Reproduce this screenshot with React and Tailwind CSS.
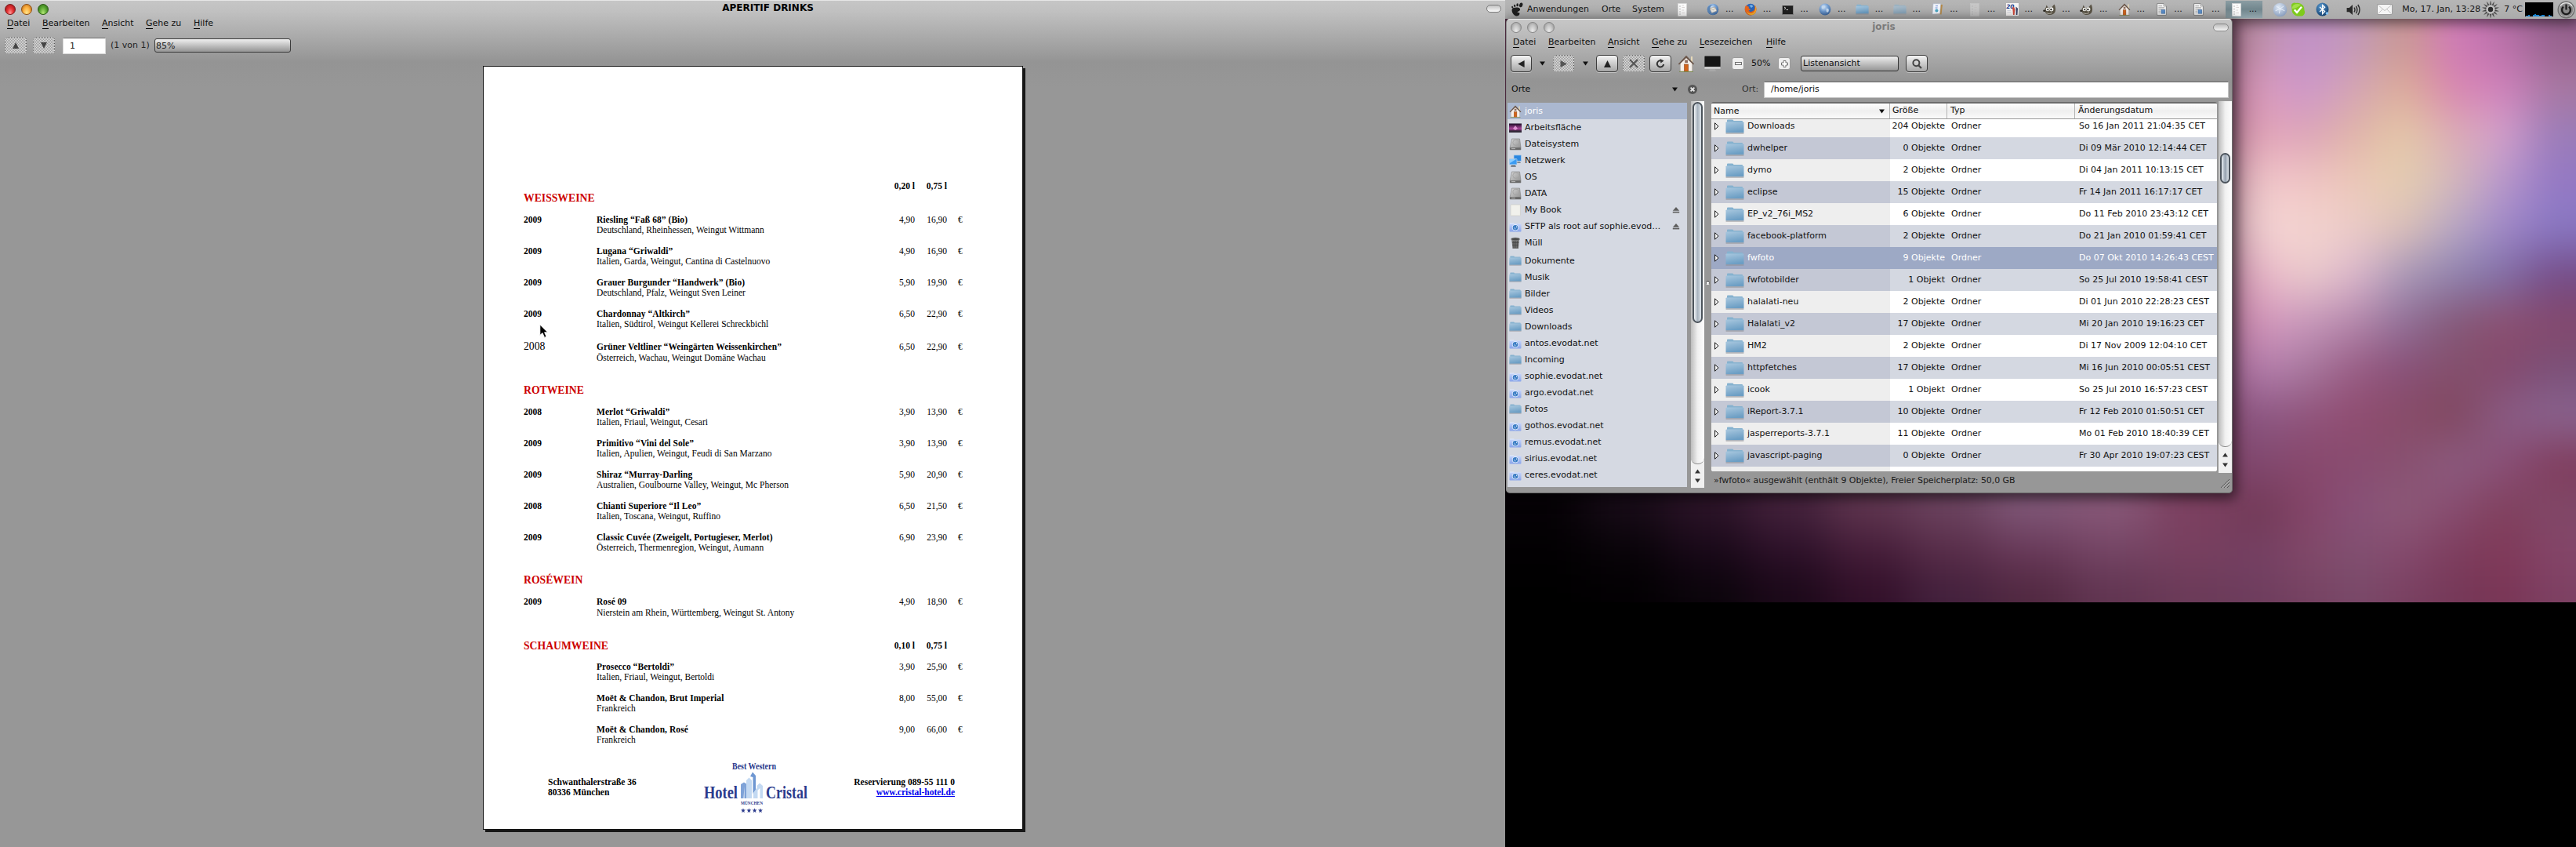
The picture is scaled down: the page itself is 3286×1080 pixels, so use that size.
import React from "react";

/* ---------- wallpaper ---------- */

const MESH = [
  ["#c094a8", "#c090c8", "#c098b8", "#c89890", "#d07ab8", "#b870a8", "#94608c"],
  ["#dc9cbc", "#cc96cc", "#d4a4b4", "#dcac98", "#d884b0", "#d080bc", "#a878a0"],
  ["#e4a4b8", "#dca4b8", "#e0b4a8", "#e4c8a8", "#dcacb4", "#d4a0cc", "#9a7cb8"],
  ["#f2c8cc", "#efc4c4", "#ecc8b8", "#e4ceb0", "#d4b8bc", "#b898cc", "#9478c4"],
  ["#f4d4d4", "#f4d4d0", "#ecccc8", "#dcc0b8", "#b8a8c4", "#a088c8", "#8878c4"],
  ["#e8b4c8", "#eccccc", "#dcb8cc", "#a898b8", "#9084b0", "#8070a8", "#744c88"],
  ["#d898bc", "#c898bc", "#b488ac", "#907098", "#845878", "#8c5070", "#84486c"],
  ["#b880b0", "#a87aa0", "#985c84", "#885078", "#84506c", "#84486c", "#7a5078"],
  ["#8c5884", "#90547c", "#904c70", "#884c68", "#80465e", "#8a5c84", "#8a6490"],
  ["#804870", "#88486c", "#884c70", "#885070", "#8c5c80", "#8a5078", "#803c5c"],
  ["#703854", "#844468", "#885078", "#8c5a78", "#884c70", "#80405c", "#804868"],
  ["#744064", "#804868", "#805070", "#84486c", "#7c3c5c", "#803858", "#844468"],
  ["#6c3c5c", "#744060", "#784868", "#784060", "#743858", "#783454", "#7c4062"],
];
const STRIP = [
  ["#060206", "#180c18", "#2c1428", "#44223c", "#603650", "#6c4460", "#805878", "#885878", "#7c4060"],
  ["#020002", "#080308", "#180818", "#2c1028", "#441c38", "#582c48", "#683858", "#744464", "#784060"],
  ["#000000", "#020002", "#0a040a", "#1a0818", "#300f28", "#42203c", "#502840", "#603450", "#6a3a58"],
];

function Wallpaper() {
  return (
    <svg className="absolute left-0 top-0" width="1366" height="768" viewBox="0 0 1366 768">
      <defs>
        <filter id="soft" x="-10%" y="-10%" width="120%" height="120%" colorInterpolationFilters="sRGB">
          <feGaussianBlur stdDeviation="28" />
        </filter>
      </defs>
      <rect width="1366" height="768" fill="#6a3a58" />
      <g filter="url(#soft)">
        {STRIP.map((row, r) =>
          row.map((c, i) => (
            <rect key={r + "-" + i} x={i === 0 ? -100 : i * 103} y={r === 0 ? 500 : 620 + r * 55} width={i === 0 ? 204 : 104} height={r === 0 ? 176 : r === 2 ? 160 : 56} fill={c} />
          ))
        )}
        {MESH.map((row, r) =>
          row.map((c, i) => (
            <rect key={r + "-" + i} x={927 + i * 63} y={r === 0 ? -60 : 20 + r * 60} width={i === 6 ? 160 : 64} height={r === 0 ? 141 : r === 12 ? 140 : 61} fill={c} />
          ))
        )}
      </g>
    </svg>
  );
}

/* ---------- icons ---------- */

const Svg = ({ w = 16, h = 16, vb, children }) => (
  <svg className="block shrink-0" width={w} height={h} viewBox={vb || "0 0 16 16"}>{children}</svg>
);

function Defs() {
  return (
    <svg width="0" height="0" className="absolute">
      <defs>
        <linearGradient id="fold" x1="0" y1="0" x2="0.3" y2="1">
          <stop offset="0" stopColor="#a9c8df" />
          <stop offset="1" stopColor="#6c9ec4" />
        </linearGradient>
        <linearGradient id="net" x1="0" y1="0" x2="0" y2="1">
          <stop offset="0" stopColor="#c5d4fa" />
          <stop offset="1" stopColor="#88a4ea" />
        </linearGradient>
        <linearGradient id="disk" x1="0" y1="0" x2="1" y2="1">
          <stop offset="0" stopColor="#d6d6d6" />
          <stop offset="1" stopColor="#8c8c8c" />
        </linearGradient>
        <radialGradient id="orb" cx="0.4" cy="0.3" r="0.75">
          <stop offset="0" stopColor="#cfe2f7" />
          <stop offset="0.5" stopColor="#6f9bd0" />
          <stop offset="1" stopColor="#3a649c" />
        </radialGradient>
        <radialGradient id="paleorb" cx="0.4" cy="0.3" r="0.75">
          <stop offset="0" stopColor="#dfe9f5" />
          <stop offset="1" stopColor="#8499ba" />
        </radialGradient>
        <radialGradient id="bt" cx="0.4" cy="0.3" r="0.75">
          <stop offset="0" stopColor="#5a9ad0" />
          <stop offset="1" stopColor="#0e3c6c" />
        </radialGradient>
        <linearGradient id="wall" x1="0" y1="0" x2="0" y2="1">
          <stop offset="0" stopColor="#1a0c24" />
          <stop offset="0.55" stopColor="#a8459a" />
          <stop offset="1" stopColor="#1c0e20" />
        </linearGradient>
        <pattern id="dither" width="2" height="2" patternUnits="userSpaceOnUse">
          <rect width="1" height="1" fill="#989898" />
          <rect x="1" y="1" width="1" height="1" fill="#989898" />
        </pattern>
      </defs>
    </svg>
  );
}

const Folder = ({ w = 16, h = 13, faded }) => (
  <Svg w={w} h={h} vb="0 0 24 19">
    <g opacity={faded ? 0.55 : 1}>
      <path d="M2 1.5Q2 .5 3 .5H9Q10 .5 10.5 2H21Q22 2 22 3V6H2Z" fill="#86b2cf" />
      <path d="M.5 4.2Q.5 3.4 1.5 3.4H22.5Q23.5 3.4 23.5 4.2V17.3H.5Z" fill="url(#fold)" />
      <path d="M.6 18H23.4" stroke="#8f8f94" strokeWidth="1" />
    </g>
  </Svg>
);
const NetFolder = () => (
  <Svg>
    <path d="M1 3.5H6L7 4.5H15V6H1Z" fill="#e4ecfb" />
    <rect x=".5" y="4.5" width="15" height="10" rx=".8" fill="url(#net)" />
    <circle cx="8" cy="9.2" r="4" fill="#eef5ff" />
    <circle cx="8" cy="9.2" r="3.3" fill="#3a7cc4" />
    <path d="M6 8L8.3 10.6L8 12Z M9 7L10.4 8.5L9 9Z" fill="#eef6ff" />
  </Svg>
);
const Home = ({ s = 16 }) => (
  <Svg w={s} h={s} vb="0 0 22 22">
    <path d="M17 2H19V9H17Z" fill="#e8d9b8" />
    <path d="M3.5 10L11 2.5L18.5 10V21H3.5Z" fill="#f6f1ec" stroke="#b9aca0" strokeWidth=".6" />
    <path d="M11 .8L.8 11.6L2 12.6L11 4L20 12.6L21.2 11.6Z" fill="#6b564a" />
    <rect x="8.6" y="12" width="5" height="9" fill="#d4651a" stroke="#87401a" strokeWidth=".6" />
    <rect x="9.2" y="6.5" width="3.8" height="3.6" fill="#8f6f60" />
    <path d="M2 21.4H20" stroke="#7c8b4f" strokeWidth="1" />
  </Svg>
);
const Disk = () => (
  <Svg>
    <path d="M3.5 1H13.5L15 12V15H1.2V12Z" fill="url(#disk)" stroke="#7e7e7e" strokeWidth=".6" />
    <ellipse cx="8.8" cy="5.8" rx="4" ry="3.6" fill="none" stroke="#a3a3a3" strokeWidth=".9" />
    <rect x="1.2" y="12.2" width="13.6" height="2.8" fill="#686868" />
    <path d="M3 13.6H8" stroke="#ccc" strokeWidth=".8" />
  </Svg>
);
const Desktop = () => (
  <Svg>
    <rect x="0" y="2.5" width="16" height="11.5" fill="url(#wall)" />
    <path d="M5 9L8 5L11 9L8 11Z" fill="#f0a8e4" opacity=".8" />
    <rect x="0" y="11.5" width="16" height="2.5" fill="#332a3a" />
  </Svg>
);
const Network = () => (
  <Svg>
    <rect x="6" y=".8" width="9.6" height="7.6" rx=".6" fill="#2a86e0" stroke="#c3d4e6" strokeWidth=".7" />
    <path d="M8.5 9.5H14L15 10.8H8Z" fill="#5a6672" />
    <rect x=".4" y="5.5" width="9.6" height="7.4" rx=".6" fill="#3b9bf2" stroke="#c3d4e6" strokeWidth=".7" />
    <path d="M1 6L9 6L1 11Z" fill="#8accff" />
    <path d="M3 14H8L9 15.5H2Z" fill="#3c4650" />
  </Svg>
);
const PlainDoc = () => (
  <Svg>
    <rect x="2" y="1" width="12.4" height="14" rx=".6" fill="#f1f1ec" stroke="#cfcfc8" strokeWidth=".7" />
  </Svg>
);
const Trash = () => (
  <Svg>
    <path d="M3.2 3H13L12 15H4.5Z" fill="#6f6f6f" />
    <ellipse cx="8.1" cy="2.9" rx="5.6" ry="1.9" fill="#4a4a4a" stroke="#9a9a9a" strokeWidth=".6" />
    <path d="M6 5V14M8.2 5V14M10.4 5V14M4 7.5H12.4M4.2 10.5H12" stroke="#3b3b3b" strokeWidth=".6" />
  </Svg>
);
const Eject = () => (
  <Svg w={10} h={8} vb="0 0 10 8">
    <path d="M5 0L9.2 4.8H.8Z" fill="#5d5d5d" />
    <rect x=".8" y="5.8" width="8.4" height="1.6" fill="#5d5d5d" />
  </Svg>
);
const ListDoc = ({ faded }) => (
  <Svg w={12} h={17} vb="0 0 12 17">
    <g opacity={faded ? 0.5 : 1}>
      <rect x=".5" y=".5" width="11" height="16" fill={faded ? "#dcdcdc" : "#fbfbfb"} stroke="#d8d8d8" strokeWidth=".6" />
      <path d="M2 4H4M2 7.5H4M2 11H4M2 14H4" stroke="#b8b8b8" strokeWidth="1" />
      <path d="M5.5 3H8M5.5 5.5H9M5.5 9H8M5.5 12.5H9" stroke="#d0c8c8" strokeWidth=".7" />
    </g>
  </Svg>
);
const Foot = () => (
  <Svg w={16} h={18} vb="0 0 16 18">
    <g fill="#1e1e1e">
      <path d="M1.6 9.2C2 6.8 6.5 6.2 9.8 6.8C12.8 7.4 12.6 10.5 10.5 11.2C8.8 11.8 8.4 12.6 9 13.4C10 12.6 11.6 13 11.4 14.8C11.2 17 7.5 18.4 5 16.6C3 15 1.2 12 1.6 9.2Z" />
      <ellipse cx="13.2" cy="3.4" rx="2.1" ry="3" transform="rotate(18 13.2 3.4)" />
      <ellipse cx="8.7" cy="3.2" rx="1.3" ry="2" />
      <ellipse cx="5.2" cy="4.4" rx="1.1" ry="1.7" transform="rotate(-15 5.2 4.4)" />
      <ellipse cx="2.2" cy="6.2" rx="1" ry="1.4" transform="rotate(-25 2.2 6.2)" />
    </g>
  </Svg>
);
const Thunderbird = () => (
  <Svg>
    <circle cx="8" cy="8" r="7.3" fill="url(#orb)" />
    <path d="M4 6.5L10.5 5L13 10L6.5 12.5Z" fill="#eceae4" stroke="#9a8f80" strokeWidth=".5" />
    <path d="M4 6.5L9 9L10.5 5" fill="none" stroke="#a89880" strokeWidth=".6" />
    <path d="M1 9C2 14 7 16 11 14.2C7 14 4.5 12 4 7.5C4 5 5.5 3.2 8 2.2C4 1.6 0 5 1 9Z" fill="#5b86b8" />
  </Svg>
);
const Firefox = () => (
  <Svg>
    <circle cx="8" cy="8" r="7.2" fill="#2c66b8" />
    <path d="M1 5C-.6 11 3.6 15.8 8.4 15.6C13.4 15.4 16.6 10.6 15.2 5.4C14.8 4 14.2 3 13.2 2.2C14 5 13.6 8 11.6 9.8C9.6 11.6 6.4 11 5.4 9.4L8 8.8L7.2 7.4L5.6 6.4L6 4.6C4.6 4.6 3.6 4 3 2.6C2 3 1.4 4 1 5Z" fill="#e9661c" />
    <path d="M13.2 2.2C15 6 14.4 10 11.6 12C8.5 14 4.5 13 2.6 10C3.8 14.2 8 16 11.6 14.4C15.6 12.4 16.6 6 13.2 2.2Z" fill="#f7b22c" />
    <path d="M6.5 3L9.5 2.2L11.4 4L9 6Z" fill="#77b4ea" />
  </Svg>
);
const Terminal = () => (
  <Svg w={15} h={14} vb="0 0 15 14">
    <rect x=".5" y="1.5" width="14" height="12" rx=".6" fill="#202020" stroke="#8a8a8a" strokeWidth="1" />
    <path d="M.5 1.5H14.5" stroke="#c4c4c4" strokeWidth="1.2" />
    <path d="M3 4L5 5.4L3 6.8M5.6 7.5H8" stroke="#e8e8e8" strokeWidth=".9" fill="none" />
  </Svg>
);
const Globe = ({ pale, s = 16 }) => (
  <Svg w={s} h={s}>
    <circle cx="8" cy="8" r="7.4" fill={pale ? "url(#paleorb)" : "url(#orb)"} />
    {pale ? (
      <path d="M4 4L8 7L12 4M8 7L7 12M8 7L13 9M3 9L8 7" stroke="#eef4fb" strokeWidth=".7" fill="none" />
    ) : (
      <path d="M4 3.6C6 2.4 8 3 8.4 4.4C8 6 6 6 5.6 7.6C4.4 7.4 3 6 4 3.6ZM9.5 7C12 6 13.6 8 12.6 10.4C11.4 12.4 10 12 9.6 10Z" fill="#c4d9ef" />
    )}
  </Svg>
);
const Writer = () => (
  <Svg w={15} h={16} vb="0 0 15 16">
    <path d="M4 1L14 2L12.5 14.6L2 13Z" fill="#b48a4a" />
    <path d="M2 .8L11.6 .8L10.6 13.6L1 14Z" fill="#f2f5fb" stroke="#a8b4cc" strokeWidth=".5" />
    <path d="M5 3.6H8M4.6 6H7.6" stroke="#6f8fd8" strokeWidth="1" />
    <circle cx="6.4" cy="9.6" r="2" fill="#4aa6c4" />
  </Svg>
);
const Calendar = () => (
  <Svg w={16} h={16}>
    <rect width="16" height="16" fill="#f6f4f4" />
    <text x="0.2" y="6.6" fontSize="7.4" fontWeight="bold" fontStyle="italic" fontFamily="DejaVu Sans" fill="#1e3d8c">20</text>
    <path d="M8 6L10 4.4L11.4 8L10.6 15H9L8.6 10Z" fill="#cf4a3c" />
    <path d="M12.4 4.6L15 6.8L14.4 15H12.8Z" fill="#3a4468" />
    <path d="M1.4 9.5H6M1.4 11.5H6" stroke="#c8ccd8" strokeWidth=".7" />
  </Svg>
);
const Gimp = () => (
  <Svg w={17} h={15} vb="0 0 17 15">
    <path d="M3 5C5 6 8 5 11 4.6L14.4 .6C16 3 16.6 7 15.6 10C14 14 7 15.6 4 12C2.8 10.6 2 7.4 3 5Z" fill="#5c5648" />
    <path d="M3.4 5.4L4.6 1.4L6.8 5Z" fill="#5c5648" />
    <circle cx="6" cy="7" r="2.3" fill="#f6f6f2" />
    <circle cx="10.8" cy="6.8" r="2.6" fill="#f6f6f2" />
    <circle cx="6.3" cy="7.2" r="1" fill="#111" />
    <circle cx="10.4" cy="7.2" r="1.1" fill="#111" />
    <ellipse cx="1.8" cy="8.8" rx="1.6" ry="1.3" fill="#2a2620" />
    <path d="M4.6 11.6C7 13 10 12.6 12 11" stroke="#d8d4c8" strokeWidth=".9" fill="none" />
  </Svg>
);
const Odt = () => (
  <Svg w={13} h={16} vb="0 0 13 16">
    <path d="M.6 .6H9L12.4 4V15.4H.6Z" fill="#f4f4f4" stroke="#7d7d7d" strokeWidth=".9" />
    <path d="M9 .6V4H12.4" fill="#d6d6d6" stroke="#8a8a8a" strokeWidth=".6" />
    <path d="M2.4 3.6H7M2.4 5.8H10M2.4 8H10M2.4 10.2H5M2.4 12.4H5" stroke="#9c9c9c" strokeWidth=".9" />
    <rect x="6" y="8.6" width="4.8" height="4.6" fill="#5b8fcb" stroke="#3b6498" strokeWidth=".5" />
  </Svg>
);
const SkypeOk = () => (
  <Svg w={19} h={19} vb="0 0 19 19">
    <path d="M1 5C0 1 5 -.4 7 1C13 0 18 4.4 17.4 10C19.6 14 16 18.6 12 17.4C6 18.6 1 14 1.6 8.6Z" fill="#7ecb1c" />
    <path d="M2 6C3 1.6 9 1 13 3C10 6 5 8 2 8Z" fill="#b4e860" opacity=".7" />
    <path d="M4.8 9.4L8 13L14 5.8" stroke="#fff" strokeWidth="2.4" fill="none" />
  </Svg>
);
const Bluetooth = () => (
  <Svg w={17} h={18} vb="0 0 17 18">
    <ellipse cx="8.5" cy="9" rx="8" ry="8.6" fill="url(#bt)" />
    <path d="M5 6L11.6 11.6L8.6 14.6V3.4L11.6 6.2L5 12" stroke="#fff" strokeWidth="1.3" fill="none" />
    <circle cx="14.4" cy="14" r="1.8" fill="#7fc2f4" />
  </Svg>
);
const Speaker = () => (
  <Svg w={19} h={15} vb="0 0 19 15">
    <path d="M.6 5H3.8L8 1V14L3.8 10.2H.6Z" fill="#2a2a2a" />
    <path d="M10 4.6Q12 7.5 10 10.4M12.4 2.8Q15.4 7.5 12.4 12.2M14.8 1Q19.2 7.5 14.8 14" stroke="#2a2a2a" strokeWidth="1.4" fill="none" />
  </Svg>
);
const Mail = () => (
  <Svg w={20} h={14} vb="0 0 20 14">
    <rect x=".5" y=".5" width="19" height="13" rx=".6" fill="#f5f5f5" stroke="#8f8f8f" strokeWidth=".8" />
    <path d="M1.5 1.5L10 8.6L18.5 1.5M1.5 12.6L7.4 6.6M18.5 12.6L12.6 6.6" stroke="#b3b3b3" strokeWidth=".8" fill="none" />
  </Svg>
);
const Sun = () => (
  <Svg w={22} h={22} vb="-11 -11 22 22">
    {Array.from({ length: 14 }, (_, i) => (
      <path key={i} d="M-.9 -6L0 -10.6L.9 -6Z" transform={`rotate(${(i * 360) / 14})`} fill="#333" stroke="#555" strokeWidth=".4" />
    ))}
    <circle r="4.6" fill="#c8c8c8" />
    <circle r="3.2" fill="#2b2b2b" />
  </Svg>
);
const SysMon = () => (
  <Svg w={36} h={18} vb="0 0 36 18">
    <rect width="36" height="18" fill="#000" />
    <path d="M1 18V17H4V16H6V18ZM10 18V16H12V15H14V16H18V17H21V16H25V18ZM30 18V16H32V17H34V18Z" fill="#1683cf" />
  </Svg>
);
const Power = () => (
  <Svg w={23} h={23} vb="-11.5 -11.5 23 23">
    <circle r="11" fill="#6d6d6d" />
    <circle r="9.6" fill="#c9c9c9" />
    <circle r="8.8" fill="#8a8a8a" />
    <path d="M-3.6 -3.8A5.4 5.4 0 1 0 3.6 -3.8" stroke="#1c1c1c" strokeWidth="2.4" fill="none" />
    <path d="M0 -7V0" stroke="#1c1c1c" strokeWidth="2.2" />
    <path d="M-7.4 -5A9 9 0 0 1 7.4 -5" stroke="#e6e6e6" strokeWidth="1.4" fill="none" />
  </Svg>
);

/* ---------- shared widgets ---------- */

function Menu({ items }) {
  return (
    <div className="flex h-[16px] items-center leading-[16px]">
      {items.map(([t, w]) => (
        <span key={t} className="shrink-0 whitespace-nowrap" style={{ width: w }}>
          <span className="border-b border-black">{t[0]}</span>
          {t.slice(1)}
        </span>
      ))}
    </div>
  );
}

const btn = "flex h-[22px] shrink-0 items-center justify-center rounded-[4px] border border-[#3c3c3c] bg-gradient-to-b from-[#f4f4f4] to-[#a6a6a6] shadow-[0_1px_0_#c4c4c4]";
const btnOff = "flex h-[22px] shrink-0 items-center justify-center overflow-hidden rounded-[4px] border border-dotted border-[#5a5a5a] bg-[#e0e0e0]";

function OffButton({ w, children }) {
  return (
    <div className={btnOff} style={{ width: w }}>
      <svg className="block" width={w - 2} height="20">
        <rect width={w - 2} height="20" fill="url(#dither)" />
        <g transform={`translate(${(w - 2) / 2 - 4} 6)`}>{children}</g>
      </svg>
    </div>
  );
}
const Drop = () => (
  <Svg w={7} h={6} vb="0 0 7 6"><path d="M0 .5H7L3.5 5.5Z" fill="#111" /></Svg>
);

function Scrollbar({ top, thumb, track, tint }) {
  return (
    <div className="flex w-[17px] shrink-0 flex-col bg-gradient-to-b from-[#f5f5f5] to-[#f0f0f0]">
      <div className="flex w-full flex-col rounded-b-[8px] border-b border-[#8a8a8a] bg-gradient-to-r from-[#bdbdbd] via-[#f0f0f0] to-[#fdfdfd] px-[2px]" style={{ height: track, paddingTop: top }}>
        <div
          className={
            tint
              ? "w-full rounded-full border-2 border-[#4c545c] bg-gradient-to-r from-[#f2f5f8] via-[#a9b4bf] to-[#dde4ea]"
              : "w-full rounded-full border-2 border-[#4c545c] bg-gradient-to-r from-[#e8edf2] via-[#97a3b0] to-[#dde4ea]"
          }
          style={{ height: thumb }}
        />
      </div>
      <div className="flex flex-1 flex-col items-center justify-evenly">
        <Svg w={7} h={6} vb="0 0 7 6"><path d="M0 5.5H7L3.5 .5Z" fill="#333" /></Svg>
        <Svg w={7} h={6} vb="0 0 7 6"><path d="M0 .5H7L3.5 5.5Z" fill="#333" /></Svg>
      </div>
    </div>
  );
}

/* ---------- document viewer ---------- */

function Entry({ y, n, s, a, b, tall, big }) {
  return (
    <div className={tall ? "grid h-[28px] grid-cols-[93px_346px_60px_41px_40px] leading-[14px]" : "grid h-[40px] grid-cols-[93px_346px_60px_41px_40px] content-start leading-[13px]"}>
      <span className={big ? "text-[13.7px]" : "font-bold"}>{y}</span>
      <div>
        <div className="font-bold tracking-[0.06px]">{n}</div>
        <div>{s}</div>
      </div>
      <span className="text-right">{a}</span>
      <span className="text-right">{b}</span>
      <span className="pl-[14px]">€</span>
    </div>
  );
}
const Head = ({ children }) => (
  <div className="h-[18px] w-[439px] text-[13.7px] font-bold leading-[20px] text-[#cc0000]">{children}</div>
);

const WHITE = [
  ["2009", "Riesling “Faß 68” (Bio)", "Deutschland, Rheinhessen, Weingut Wittmann", "4,90", "16,90"],
  ["2009", "Lugana “Griwaldi”", "Italien, Garda, Weingut, Cantina di Castelnuovo", "4,90", "16,90"],
  ["2009", "Grauer Burgunder “Handwerk” (Bio)", "Deutschland, Pfalz, Weingut Sven Leiner", "5,90", "19,90"],
  ["2009", "Chardonnay “Altkirch”", "Italien, Südtirol, Weingut Kellerei Schreckbichl", "6,50", "22,90"],
];
const RED = [
  ["2008", "Merlot “Griwaldi”", "Italien, Friaul, Weingut, Cesari", "3,90", "13,90"],
  ["2009", "Primitivo “Vini del Sole”", "Italien, Apulien, Weingut, Feudi di San Marzano", "3,90", "13,90"],
  ["2009", "Shiraz “Murray-Darling", "Australien, Goulbourne Valley, Weingut, Mc Pherson", "5,90", "20,90"],
  ["2008", "Chianti Superiore “Il Leo”", "Italien, Toscana, Weingut, Ruffino", "6,50", "21,50"],
  ["2009", "Classic Cuvée (Zweigelt, Portugieser, Merlot)", "Österreich, Thermenregion, Weingut, Aumann", "6,90", "23,90"],
];
const SPARK = [
  ["", "Prosecco “Bertoldi”", "Italien, Friaul, Weingut, Bertoldi", "3,90", "25,90"],
  ["", "Moët & Chandon, Brut Imperial", "Frankreich", "8,00", "55,00"],
  ["", "Moët & Chandon, Rosé", "Frankreich", "9,00", "66,00"],
];
const rows = (list) => list.map((e) => <Entry key={e[1]} y={e[0]} n={e[1]} s={e[2]} a={e[3]} b={e[4]} />);

function HotelLogo() {
  const f = { fontFamily: "Liberation Serif", fontWeight: "bold", fill: "#2b3a8c", lengthAdjust: "spacingAndGlyphs" };
  return (
    <svg className="block shrink-0 overflow-visible" width="142" height="80" viewBox="897 966 142 80">
      <text {...f} x="934" y="981" fontSize="11.5" textLength="56">Best Western</text>
      <text {...f} x="898" y="1018" fontSize="23.5" textLength="43">Hotel</text>
      <text {...f} x="977" y="1018" fontSize="23.5" textLength="53">Cristal</text>
      <path d="M945 1018V1000L949 997.5L953 1000V1018H949.5V1003L948.5 1018Z" fill="#7fa3d8" />
      <path d="M952 1018V995L955.5 991.5L959 995V1018Z" fill="#c3d9f2" />
      <path d="M957 990L960 984.5L964 989V1008L960.5 1012V991Z" fill="#6f97d2" />
      <path d="M961 1018V1011L965 1005L966.5 1006V1018Z" fill="#c3d9f2" />
      <path d="M965.5 1002L969 998.5L973 1002V1018H969.5V1005L966 1008Z" fill="#c3d9f2" />
      <text {...f} x="945" y="1026" fontSize="7" textLength="28">MÜNCHEN</text>
      {[948, 955.4, 962.6, 970].map((x) => (
        <path key={x} transform={`translate(${x} 1033.5)`} d="M0 -3L.8 -.9L3 -.9L1.2 .5L1.9 2.7L0 1.4L-1.9 2.7L-1.2 .5L-3 -.9L-.8 -.9Z" fill="#2b3a8c" />
      ))}
    </svg>
  );
}

function Viewer() {
  return (
    <div className="relative flex h-[1080px] w-[1920px] shrink-0 flex-col border-t border-[#e6e6e6] bg-[#969696] bg-[linear-gradient(#c6c6c6_0px,#c0c0c0_14px,#949494_78px,#979797_110px)]">
      <div className="grid h-[21px] grid-cols-[1fr_auto_1fr] items-center pl-[6px] pr-[5px]">
        <div className="flex gap-[7px] pt-[1px]">
          <span className="h-[14px] w-[14px] rounded-full border border-[#7a1a1a] bg-[radial-gradient(ellipse_at_50%_90%,#ff9a9a_0%,#e63434_45%,#8c0c14_100%)]" />
          <span className="h-[14px] w-[14px] rounded-full border border-[#8c4c10] bg-[radial-gradient(ellipse_at_50%_90%,#ffe890_0%,#fcb040_50%,#a85a10_100%)]" />
          <span className="h-[14px] w-[14px] rounded-full border border-[#2c5a14] bg-[radial-gradient(ellipse_at_50%_90%,#b4e878_0%,#5ca834_50%,#24600c_100%)]" />
        </div>
        <span className="-mt-[3px] pl-[38px] text-[12px] font-bold leading-[14px] text-black">APERITIF DRINKS</span>
        <span className="-mt-px h-[10px] w-[19px] justify-self-end rounded-full border border-[#7c7c7c] bg-gradient-to-b from-[#c4c4c4] to-[#fafafa]" />
      </div>
      <div className="pl-[9px]"><Menu items={[["Datei", 45], ["Bearbeiten", 76], ["Ansicht", 56], ["Gehe zu", 61], ["Hilfe", 40]]} /></div>
      <div className="mt-[8px] flex h-[24px] items-center pl-[6px] text-[#222]">
        <OffButton w={28}><path d="M0 8H8L4 0Z" fill="#444" /></OffButton>
        <div className="w-[8px]" />
        <OffButton w={28}><path d="M0 0H8L4 8Z" fill="#444" /></OffButton>
        <div className="ml-[10px] h-[21px] w-[55px] border border-[#d8d8d8] border-t-[#6e6e6e] bg-white pl-[8px] leading-[19px]">1</div>
        <span className="ml-[6px] w-[56px] whitespace-nowrap">(1 von 1)</span>
        <div className="h-[18px] w-[174px] rounded-[3px] border border-[#3c3c3c] bg-gradient-to-b from-[#f0f0f0] to-[#949494] pl-[1px] leading-[17px]">85%</div>
      </div>

      <div className="ml-[616px] mt-[14px] h-[974px] w-[689px] shrink-0 border border-[#141414] bg-white pl-[51px] pt-[145px] font-['Liberation_Serif',serif] text-[11.5px] text-black shadow-[3px_3px_0_#171717]">
        <div className="grid h-[13px] grid-cols-[499px_41px] text-right font-bold leading-[15px]">
          <span>0,20 l</span><span>0,75 l</span>
        </div>
        <Head>WEISSWEINE</Head>
        <div className="h-[13px]" />
        {rows(WHITE)}
        <div className="h-px" />
        <Entry tall big y="2008" n="Grüner Veltliner “Weingärten Weissenkirchen”" s="Österreich, Wachau, Weingut Domäne Wachau" a="6,50" b="22,90" />
        <div className="h-[25px]" />
        <Head>ROTWEINE</Head>
        <div className="h-[13px]" />
        {rows(RED)}
        <div className="h-[11px]" />
        <Head>ROSÉWEIN</Head>
        <div className="h-[12px]" />
        <Entry tall y="2009" n="Rosé 09" s="Nierstein am Rhein, Württemberg, Weingut St. Antony" a="4,90" b="18,90" />
        <div className="h-[26px]" />
        <div className="grid h-[18px] grid-cols-[439px_60px_41px] text-right font-bold leading-[19px]">
          <div className="text-left"><Head>SCHAUMWEINE</Head></div>
          <span>0,10 l</span><span>0,75 l</span>
        </div>
        <div className="h-[12px]" />
        {rows(SPARK)}
        <div className="flex pt-[2px] font-bold leading-[13px]">
          <div className="w-[198px] pt-[25px]">
            <div className="ml-[31px]">Schwanthalerstraße 36<br />80336 München</div>
          </div>
          <div className="ml-[31px]"><HotelLogo /></div>
          <div className="w-[179px] pt-[25px] text-right">
            Reservierung 089-55 111 0<br />
            <span className="text-[#0000ee] underline">www.cristal-hotel.de</span>
          </div>
        </div>
      </div>

      <svg className="absolute left-[688px] top-[412px]" width="14" height="20" viewBox="0 0 14 20">
        <path d="M.8 1V14.4L4 11.6L6.6 17.4L9 16.2L6.6 10.8H10.6Z" fill="#000" stroke="#fff" strokeWidth=".9" />
      </svg>
    </div>
  );
}

/* ---------- top panel ---------- */

const TASKS = [
  <Thunderbird />, <Firefox />, <Terminal />, <Globe />, <Folder w={17} h={14} />, <Folder w={17} h={14} faded />, <Writer />,
  <ListDoc faded />, <Calendar />, <Gimp />, <Gimp />, <Home />, <Odt />, <Odt />, <ListDoc />,
];

function Panel() {
  return (
    <div className="relative flex h-[24px] items-center bg-gradient-to-b from-[#b6b6b6] to-[#ababab] pl-[7px] text-[#151515]">
      <Foot />
      <span className="ml-[5px] w-[95px] shrink-0">Anwendungen</span>
      <span className="w-[39px] shrink-0">Orte</span>
      <span className="w-[58px] shrink-0">System</span>
      <ListDoc />
      <div className="w-[19px] shrink-0" />
      {TASKS.map((icon, i) => (
        <div key={i} className={i === 14 ? "flex h-[22px] w-[47.7px] shrink-0 items-center bg-gradient-to-b from-[#8b9da3] via-[#71868d] to-[#93a6ad]" : "flex h-[22px] w-[47.7px] shrink-0 items-center"}>
          <div className="flex w-[28px] justify-center">{icon}</div>
          <span className="pl-[2px]">...</span>
        </div>
      ))}
      <div className="ml-[13px] flex w-[387px] shrink-0 items-center">
        <Globe pale s={19} />
        <div className="ml-[4px]"><SkypeOk /></div>
        <div className="ml-[13px]"><Bluetooth /></div>
        <div className="ml-[22px]"><Speaker /></div>
        <div className="ml-[20px]"><Mail /></div>
        <span className="ml-[12px] w-[102px] shrink-0 whitespace-nowrap">Mo, 17. Jan, 13:28</span>
        <Sun />
        <span className="ml-[6px] w-[27px] shrink-0 whitespace-nowrap">7 °C</span>
        <SysMon />
        <div className="ml-[5px]"><Power /></div>
      </div>
    </div>
  );
}

/* ---------- file manager ---------- */

const PLACES = [
  ["joris", "home"], ["Arbeitsfläche", "desk"], ["Dateisystem", "disk"], ["Netzwerk", "net"], ["OS", "disk"], ["DATA", "disk"],
  ["My Book", "doc", true], ["SFTP als root auf sophie.evod…", "remote", true], ["Müll", "trash"],
];
const MARKS = [
  ["Dokumente", "folder"], ["Musik", "folder"], ["Bilder", "folder"], ["Videos", "folder"], ["Downloads", "folder"],
  ["antos.evodat.net", "remote"], ["Incoming", "folder"], ["sophie.evodat.net", "remote"], ["argo.evodat.net", "remote"], ["Fotos", "folder"],
  ["gothos.evodat.net", "remote"], ["remus.evodat.net", "remote"], ["sirius.evodat.net", "remote"], ["ceres.evodat.net", "remote"],
];
const ICONS = {
  home: <Home />, desk: <Desktop />, disk: <Disk />, net: <Network />, doc: <PlainDoc />, remote: <NetFolder />, trash: <Trash />,
  folder: <Folder w={16} h={13} />,
};

const FILES = [
  ["Downloads", "204 Objekte", "So 16 Jan 2011 21:04:35 CET"],
  ["dwhelper", "0 Objekte", "Di 09 Mär 2010 12:14:44 CET"],
  ["dymo", "2 Objekte", "Di 04 Jan 2011 10:13:15 CET"],
  ["eclipse", "15 Objekte", "Fr 14 Jan 2011 16:17:17 CET"],
  ["EP_v2_76i_MS2", "6 Objekte", "Do 11 Feb 2010 23:43:12 CET"],
  ["facebook-platform", "2 Objekte", "Do 21 Jan 2010 01:59:41 CET"],
  ["fwfoto", "9 Objekte", "Do 07 Okt 2010 14:26:43 CEST"],
  ["fwfotobilder", "1 Objekt", "So 25 Jul 2010 19:58:41 CEST"],
  ["halalati-neu", "2 Objekte", "Di 01 Jun 2010 22:28:23 CEST"],
  ["Halalati_v2", "17 Objekte", "Mi 20 Jan 2010 19:16:23 CET"],
  ["HM2", "2 Objekte", "Di 17 Nov 2009 12:04:10 CET"],
  ["httpfetches", "17 Objekte", "Mi 16 Jun 2010 00:05:51 CEST"],
  ["icook", "1 Objekt", "So 25 Jul 2010 16:57:23 CEST"],
  ["iReport-3.7.1", "10 Objekte", "Fr 12 Feb 2010 01:50:51 CET"],
  ["jasperreports-3.7.1", "11 Objekte", "Mo 01 Feb 2010 18:40:39 CET"],
  ["javascript-paging", "0 Objekte", "Fr 30 Apr 2010 19:07:23 CEST"],
];

function Place({ p, sel }) {
  return (
    <div className={sel ? "flex h-[21px] items-center bg-[#abb8d0] pl-[2px] text-white" : "flex h-[21px] items-center pl-[2px]"}>
      {ICONS[p[1]]}
      <span className="ml-[4px] flex-1 whitespace-nowrap">{p[0]}</span>
      {p[2] && <div className="pr-[9px]"><Eject /></div>}
    </div>
  );
}

function FileRow({ f, i }) {
  const sel = i === 6;
  const odd = i % 2 === 1;
  const base = sel ? "bg-[#9da9c5] text-white" : odd ? "bg-[#d4d8e1]" : "bg-white";
  const first = sel ? "bg-[#9da9c5]" : odd ? "bg-[#c4c8d5]" : "bg-[#eeeeee]";
  return (
    <div className={"grid h-[28px] shrink-0 grid-cols-[228px_73px_163px_181px] whitespace-nowrap leading-[27px] " + base}>
      <div className={"flex items-center pl-[4px] " + first}>
        {f && (
          <>
            <Svg w={6} h={10} vb="0 0 6 10"><path d="M.6 .8L5 5L.6 9.2Z" fill="#fff" stroke="#111" strokeWidth="1" /></Svg>
            <div className="ml-[8px] pt-[1px]"><Folder w={24} h={19} /></div>
            <span className="-mt-px ml-[4px]">{f[0]}</span>
          </>
        )}
      </div>
      <span className="pr-[3px] text-right">{f && f[1]}</span>
      <span className="pl-[5px]">{f && "Ordner"}</span>
      <span className="pl-[5px]">{f && f[2]}</span>
    </div>
  );
}

function FileManager() {
  const knob = "h-[14px] w-[14px] rounded-full border border-[#868686] bg-[radial-gradient(ellipse_at_50%_90%,#ececec_0%,#c4c4c4_50%,#8c8c8c_100%)]";
  return (
    <div className="relative ml-px flex h-[605px] w-[927px] flex-col rounded-[5px] border border-l-[#8a8a8a] border-r-[#6e6e6e] border-t-[#ececec] border-b-[#6a6a6a] bg-[#969696] bg-[linear-gradient(#c6c6c6_0px,#c0c0c0_12px,#949494_78px,#979797_100px)] shadow-[2px_4px_16px_3px_rgba(0,0,0,0.55)]">
      <div className="grid h-[20px] grid-cols-[1fr_auto_1fr] items-center pl-[5px] pr-[4px]">
        <div className="flex gap-[7px]"><span className={knob} /><span className={knob} /><span className={knob} /></div>
        <span className="-mt-[2px] pl-[36px] text-[12px] font-bold leading-[14px] text-[#7a7a7a]">joris</span>
        <span className="h-[10px] w-[20px] justify-self-end rounded-full border border-[#8a8a8a] bg-gradient-to-b from-[#bdbdbd] to-[#f4f4f4]" />
      </div>
      <div className="mt-[1px] pl-[8px]">
        <Menu items={[["Datei", 45], ["Bearbeiten", 76], ["Ansicht", 56], ["Gehe zu", 61], ["Lesezeichen", 85], ["Hilfe", 40]]} />
      </div>
      <div className="mt-[7px] flex h-[24px] items-center pl-[5px]">
        <div className={btn + " w-[27px]"}><Svg w={9} h={9} vb="0 0 9 9"><path d="M8.6 0V9L.2 4.5Z" fill="#222" /></Svg></div>
        <div className="flex w-[27px] justify-center"><Drop /></div>
        <OffButton w={27}><path d="M0 0V9L8.4 4.5Z" fill="#555" /></OffButton>
        <div className="flex w-[28px] justify-center"><Drop /></div>
        <div className={btn + " w-[28px]"}><Svg w={9} h={9} vb="0 0 9 9"><path d="M0 9H9L4.5 0Z" fill="#222" /></Svg></div>
        <div className="w-[6px]" />
        <OffButton w={28}><path d="M-1 -1L9 9M9 -1L-1 9" stroke="#555" strokeWidth="2" /></OffButton>
        <div className="w-[6px]" />
        <div className={btn + " w-[28px]"}>
          <Svg w={12} h={12} vb="0 0 12 12">
            <path d="M8.6 3A4.2 4.2 0 1 0 10.2 7" stroke="#333" strokeWidth="2" fill="none" />
            <path d="M5.6 0L10.6 2.6L6.4 5.6Z" fill="#333" />
          </Svg>
        </div>
        <div className="ml-[8px]"><Home s={22} /></div>
        <div className="ml-[12px]">
          <Svg w={21} h={21} vb="0 0 21 21">
            <rect x=".4" y=".4" width="20.2" height="14" rx=".6" fill="#151515" />
            <rect x=".4" y="14" width="20.2" height="3" fill="#c9c9c9" />
            <path d="M7 17H14L15 20H6Z" fill="#a8a8a8" />
          </Svg>
        </div>
        <div className="ml-[14px] flex h-[16px] w-[16px] items-center justify-center rounded-[3px] border border-[#9a9a9a] bg-[#efefef]"><span className="h-[4px] w-[9px] border border-[#707070]" /></div>
        <span className="ml-[9px] w-[34px]">50%</span>
        <div className="flex h-[16px] w-[16px] items-center justify-center rounded-[3px] border border-[#9a9a9a] bg-[#efefef]">
          <Svg w={9} h={9} vb="0 0 9 9"><path d="M3 .5H6V3H8.5V6H6V8.5H3V6H.5V3H3Z" fill="#fff" stroke="#707070" strokeWidth="1" /></Svg>
        </div>
        <div className="ml-[13px] h-[20px] w-[125px] rounded-[3px] border border-[#333] bg-gradient-to-b from-[#efefef] to-[#969696] pl-[2px] leading-[18px]">Listenansicht</div>
        <div className={btn + " ml-[9px] w-[28px]"}>
          <Svg w={13} h={13} vb="0 0 13 13"><circle cx="5.4" cy="5.2" r="4" fill="none" stroke="#444" strokeWidth="2" /><path d="M8.2 8.2L12 12" stroke="#444" strokeWidth="2.2" /></Svg>
        </div>
      </div>
      <div className="mt-[10px] flex h-[22px] items-center pl-[6px]">
        <span className="w-[205px]">Orte</span>
        <Drop />
        <div className="ml-[13px]">
          <Svg w={12} h={12} vb="0 0 12 12"><circle cx="6" cy="6" r="6" fill="#555" /><path d="M3.6 3.6L8.4 8.4M8.4 3.6L3.6 8.4" stroke="#e8e8e8" strokeWidth="1.8" /></Svg>
        </div>
        <span className="ml-[57px] w-[28px] text-[#333]">Ort:</span>
        <div className="flex h-[21px] w-[593px] items-center border border-[#c4c4c4] border-t-[#626262] bg-white pl-[8px]">/home/joris</div>
      </div>
      <div className="mt-[5px] flex h-[495px]">
        <div className="ml-px mt-[1px] h-[490px] w-[229px] shrink-0 bg-[#d5d9e2]">
          {PLACES.map((p, i) => <Place key={i} p={p} sel={i === 0} />)}
          <div className="h-[2px]" />
          {MARKS.map((p, i) => <Place key={i} p={p} />)}
        </div>
        <div className="-mt-px ml-[5px] flex h-[493px]"><Scrollbar top={1} thumb={282} track={463} tint /></div>
        <div className="flex w-[9px] items-center justify-center"><span className="-mt-[34px] h-[5px] w-[5px] rounded-full border border-x-[#777] border-b-white border-t-[#333] bg-white" /></div>
        <div className="w-[664px]">
          <div className="flex h-[473px]">
            <div className="flex h-[471px] w-[645px] shrink-0 flex-col overflow-hidden rounded-[3px] border-t-2 border-t-[#6c6c6c] bg-white">
              <div className="z-10 grid h-[20px] shrink-0 grid-cols-[228px_73px_163px_181px] border-b border-[#9a9a9a] bg-gradient-to-b from-[#fdfdfd] via-[#efefef] to-[#fafafa] leading-[18px]">
                <span className="flex items-center justify-between border-r border-[#b4b4b4] pl-[3px] pr-[6px]">Name <Drop /></span>
                <span className="border-r border-[#b4b4b4] pl-[3px]">Größe</span>
                <span className="border-r border-[#b4b4b4] pl-[4px]">Typ</span>
                <span className="pl-[4px]">Änderungsdatum</span>
              </div>
              <div className="-mt-[5px] flex flex-col">
                {FILES.map((f, i) => <FileRow key={i} f={f} i={i} />)}
                <FileRow i={16} />
              </div>
            </div>
            <div className="-mt-px ml-[2px] flex"><Scrollbar top={66} thumb={39} track={441} /></div>
          </div>
          <div className="flex h-[19px] items-center justify-between pl-[3px]">
            <span className="whitespace-nowrap tracking-[-0.085px] text-[#1c1c1c]">»fwfoto« ausgewählt (enthält 9 Objekte), Freier Speicherplatz: 50,0 GB</span>
            <div className="mr-[3px] pt-[8px]">
              <Svg w={11} h={11} vb="0 0 11 11"><path d="M0 11L11 0M4 11L11 4M8 11L11 8" stroke="#555" strokeWidth="1" /><path d="M1.4 11L11 1.4M5.4 11L11 5.4" stroke="#ccc" strokeWidth=".6" /></Svg>
            </div>
          </div>
        </div>
      </div>
    </div>
  );
}

export default function App() {
  return (
    <div className="flex h-[1080px] w-[3286px] overflow-hidden bg-black font-['DejaVu_Sans',sans-serif] text-[11px] leading-[14px] text-[#111]">
      <Defs />
      <Viewer />
      <div className="relative h-[768px] w-[1366px] shrink-0 overflow-hidden">
        <Wallpaper />
        <div className="relative h-[24px] shadow-[0_2px_16px_4px_rgba(0,0,0,0.5)]"><Panel /></div>
        <FileManager />
      </div>
    </div>
  );
}
